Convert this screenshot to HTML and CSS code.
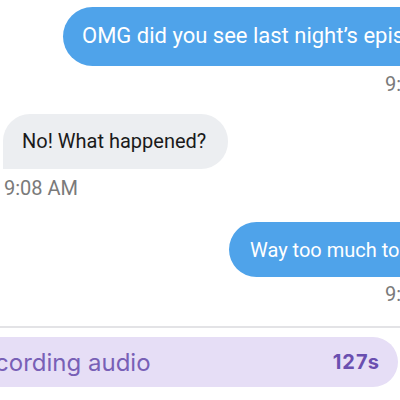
FILE: index.html
```html
<!DOCTYPE html>
<html>
<head>
<meta charset="utf-8">
<link rel="stylesheet" href="styles.css">
</head>
<body>
<div class="thread">
  <div class="bubble out first">OMG did you see last night’s episode?</div>
  <div class="time out-time first-time">9:07 AM</div>
  <div class="bubble in">No! What happened?</div>
  <div class="time in-time">9:08 AM</div>
  <div class="bubble out third">Way too much to explain over text</div>
  <div class="time out-time third-time">9:09 AM</div>
</div>
<div class="composer">
  <div class="recording">
    <span class="rec-label">Recording audio</span>
    <span class="rec-count">127s</span>
  </div>
</div>
</body>
</html>
```
FILE: styles.css
```css
html, body {
  margin: 0;
  padding: 0;
  background: #ffffff;
  width: 400px;
  height: 400px;
  overflow: hidden;
}
body {
  font-family: Roboto, "Liberation Sans", sans-serif;
}
.thread {
  width: 470px;
  display: flex;
  flex-direction: column;
  padding-top: 7px;
}
.bubble {
  font-size: 20px;
  line-height: 26px;
  white-space: nowrap;
  box-sizing: border-box;
}
.out {
  background: #4fa3ea;
  color: #ffffff;
  border-radius: 30px 0 0 30px;
}
.first {
  margin-left: 63px;
  padding: 16px 19px 17px;
  font-size: 22px;
}
.third {
  margin-left: 229px;
  padding: 15px 21px 14px;
}
.in {
  align-self: flex-start;
  background: #eceef1;
  color: #1a1a1a;
  margin-left: 3px;
  padding: 14px 22px 15px 19px;
  border-radius: 27px 27px 27px 0;
}
.time {
  font-size: 20px;
  line-height: 24px;
  color: #7a7a7a;
}
.out-time {
  align-self: flex-start;
  margin-left: 385px;
}
.first-time {
  margin-top: 6px;
  margin-bottom: 18px;
}
.in-time {
  margin-left: 4px;
  margin-top: 7px;
  margin-bottom: 22px;
}
.third-time {
  margin-top: 5px;
}
.composer {
  margin-top: 20px;
  border-top: 2px solid #e3e3e6;
  padding-top: 9px;
}
.recording {
  margin-left: -34px;
  width: 432px;
  height: 50px;
  box-sizing: border-box;
  background: #e6def6;
  border-radius: 0 25px 25px 0;
  display: flex;
  align-items: center;
  justify-content: space-between;
  padding: 0 18px 0 0;
  font-family: Inter, Roboto, sans-serif;
}
.rec-label {
  font-size: 24px;
  color: #7860b6;
  font-weight: 400;
}
.rec-count {
  font-size: 20px;
  font-weight: 700;
  color: #6a4fb0;
  letter-spacing: 1px;
}
```
